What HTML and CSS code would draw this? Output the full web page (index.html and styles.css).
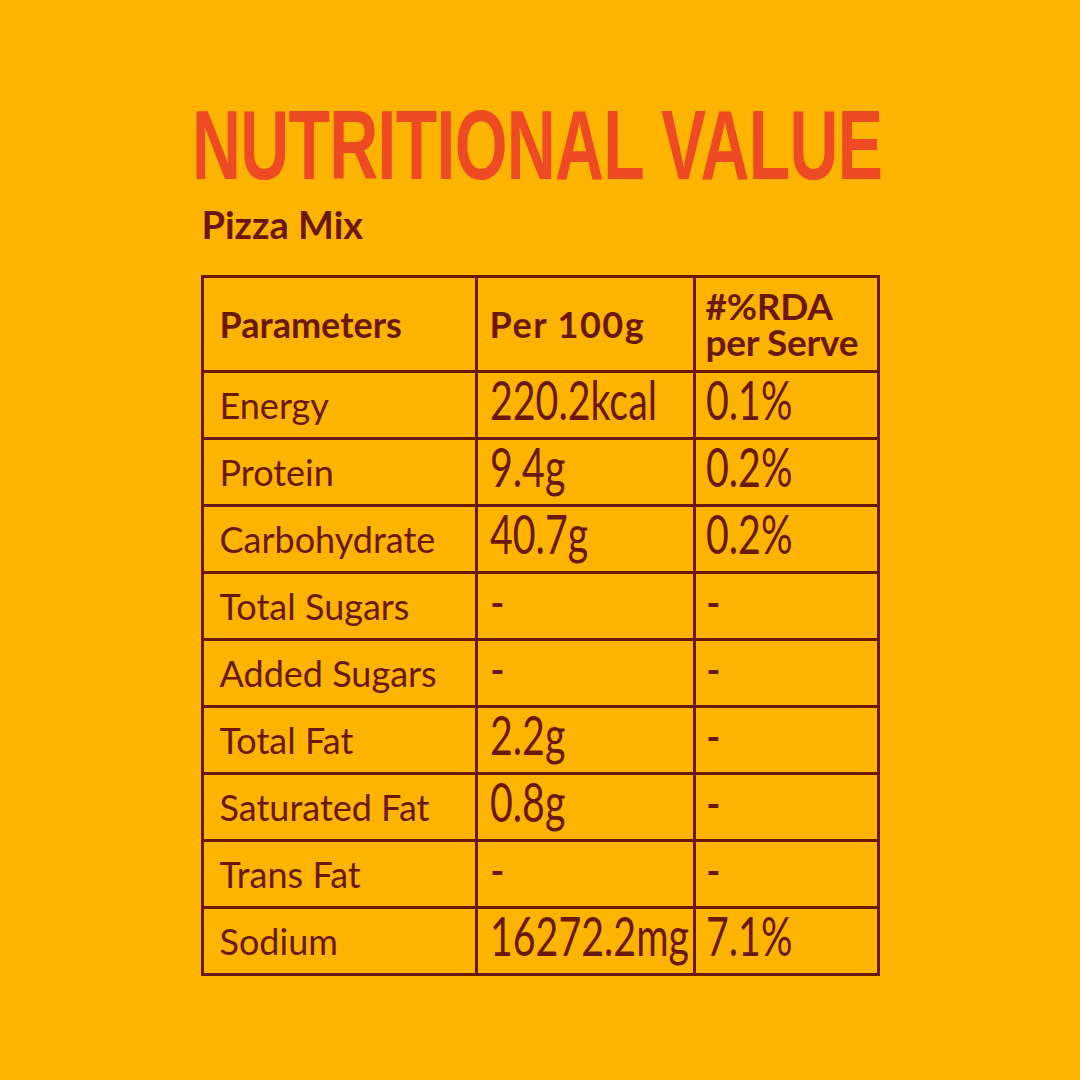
FILE: index.html
```html
<!DOCTYPE html>
<html>
<head>
<meta charset="utf-8">
<link rel="stylesheet" href="styles.css">
</head>
<body>
<main class="page">
  <h1 class="title">NUTRITIONAL VALUE</h1>
  <h2 class="subtitle">Pizza Mix</h2>
  <table class="nutri">
    <colgroup><col class="c1"><col class="c2"><col class="c3"></colgroup>
    <thead>
      <tr class="head">
        <th class="h1c">Parameters</th>
        <th class="h2c">Per 100g</th>
        <th class="h3c">#%RDA<br>per Serve</th>
      </tr>
    </thead>
    <tbody>
      <tr><td class="lab">Energy</td><td class="val"><span>220.2kcal</span></td><td class="val v3"><span>0.1%</span></td></tr>
      <tr><td class="lab">Protein</td><td class="val"><span>9.4g</span></td><td class="val v3"><span>0.2%</span></td></tr>
      <tr><td class="lab">Carbohydrate</td><td class="val"><span>40.7g</span></td><td class="val v3"><span>0.2%</span></td></tr>
      <tr><td class="lab">Total Sugars</td><td class="val"><span>-</span></td><td class="val v3"><span>-</span></td></tr>
      <tr><td class="lab">Added Sugars</td><td class="val"><span>-</span></td><td class="val v3"><span>-</span></td></tr>
      <tr><td class="lab">Total Fat</td><td class="val"><span>2.2g</span></td><td class="val v3"><span>-</span></td></tr>
      <tr><td class="lab">Saturated Fat</td><td class="val"><span>0.8g</span></td><td class="val v3"><span>-</span></td></tr>
      <tr><td class="lab">Trans Fat</td><td class="val"><span>-</span></td><td class="val v3"><span>-</span></td></tr>
      <tr><td class="lab">Sodium</td><td class="val"><span>16272.2mg</span></td><td class="val v3"><span>7.1%</span></td></tr>
    </tbody>
  </table>
</main>
</body>
</html>
```

FILE: styles.css
```css
html, body {
  margin: 0;
  padding: 0;
  background: #fcb400;
}
body {
  width: 1080px;
  height: 1080px;
  overflow: hidden;
  font-family: Lato, "Noto Sans", sans-serif;
  color: #6b180b;
}
.page {
  width: 679px;
  margin: 0 auto;
  padding-top: 97px;
}
.title {
  margin: 0 0 0 -9px;
  font-family: "Liberation Sans", Arial, sans-serif;
  font-weight: 700;
  font-size: 99px;
  line-height: 96px;
  color: #ee4a24;
  white-space: nowrap;
  transform: scaleX(0.685);
  transform-origin: left center;
  letter-spacing: -1px;
}
.subtitle {
  margin: 12px 0 0 1px;
  font-weight: 700;
  font-size: 38px;
  line-height: 38px;
}
.nutri {
  margin-top: 32px;
  border-collapse: separate;
  border-spacing: 3px;
  background: #6b180b;
  width: 679px;
  table-layout: fixed;
}
.c1 { width: 271px; }
.c2 { width: 215px; }
.c3 { width: 181px; }
.nutri th, .nutri td {
  background: #fcb400;
  padding: 0;
  text-align: left;
}
.head th {
  height: 92px;
  font-weight: 700;
  font-size: 36px;
  vertical-align: middle;
}
.h1c { padding-left: 16px !important; }
.h2c { padding-left: 12px !important; letter-spacing: 1.5px; }
.h3c { padding-left: 10px !important; font-size: 37px !important; line-height: 36px; letter-spacing: -0.3px; }
tbody td {
  height: 64px;
  vertical-align: top;
}
.lab {
  padding-left: 16px !important;
  font-size: 36px;
  line-height: 64px;
}
.val {
  padding-left: 12px !important;
  font-size: 55px;
  line-height: 53px;
}
.val span {
  display: inline-block;
  transform: scaleX(0.715);
  transform-origin: left center;
  white-space: nowrap;
}
.v3 { padding-left: 10px !important; }
```
